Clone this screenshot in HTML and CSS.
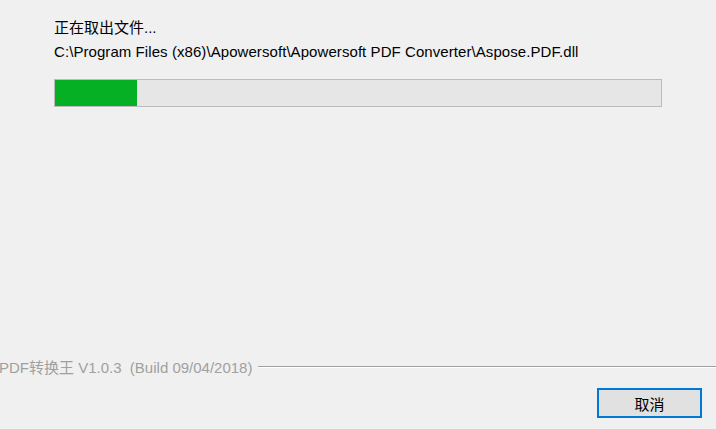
FILE: index.html
```html
<!DOCTYPE html>
<html lang="zh-CN">
<head>
<meta charset="utf-8">
<link rel="stylesheet" href="styles.css">
</head>
<body>
<div class="dialog">
  <div class="content">
    <div class="status">正在取出文件...</div>
    <div class="path">C:\Program Files (x86)\Apowersoft\Apowersoft PDF Converter\Aspose.PDF.dll</div>
    <div class="progress"><div class="fill" style="width:13.5%"></div></div>
  </div>
  <div class="brand">
    <span class="brand-text">PDF转换王 V1.0.3&nbsp; (Build 09/04/2018)</span>
    <span class="etched"></span>
  </div>
  <div class="actions">
    <button class="btn">取消</button>
  </div>
</div>
</body>
</html>
```
FILE: styles.css
```css
html, body {
  margin: 0;
  padding: 0;
  background: #f0f0f0;
}
body {
  width: 716px;
  height: 429px;
  overflow: hidden;
  font-family: "Liberation Sans", Arial, "Noto Sans CJK SC", sans-serif;
  font-size: 15px;
  color: #000;
}
.dialog {
  display: flex;
  flex-direction: column;
  height: 429px;
}
.content {
  padding: 18px 54px 0 54px;
  flex: 1;
}
.status {
  font-size: 15px;
  line-height: 20px;
  height: 25px;
}
.path {
  line-height: 17px;
  white-space: nowrap;
  letter-spacing: 0.07px;
}
.progress {
  margin-top: 19px;
  width: 606px;
  height: 26px;
  border: 1px solid #bcbcbc;
  background: #e6e6e6;
  display: flex;
}
.fill {
  background: #06b025;
  height: 100%;
}
.brand {
  display: flex;
  align-items: center;
  height: 20px;
  margin-bottom: 12px;
}
.brand-text {
  font-size: 15px;
  color: #a0a0a0;
  white-space: nowrap;
  margin-left: -1px;
  padding-right: 6px;
}
.etched {
  flex: 1;
  height: 1px;
  background: #a0a0a0;
  border-bottom: 1px solid #ffffff;
  margin-top: 1px;
}
.actions {
  display: flex;
  justify-content: flex-end;
  padding: 0 14px 11px 0;
}
.btn {
  width: 105px;
  height: 30px;
  border: 2px solid #0078d7;
  background: #e1e1e1;
  font-family: "Noto Sans CJK SC", sans-serif;
  font-size: 15px;
  color: #000;
  padding: 0;
  margin: 0;
}
```
